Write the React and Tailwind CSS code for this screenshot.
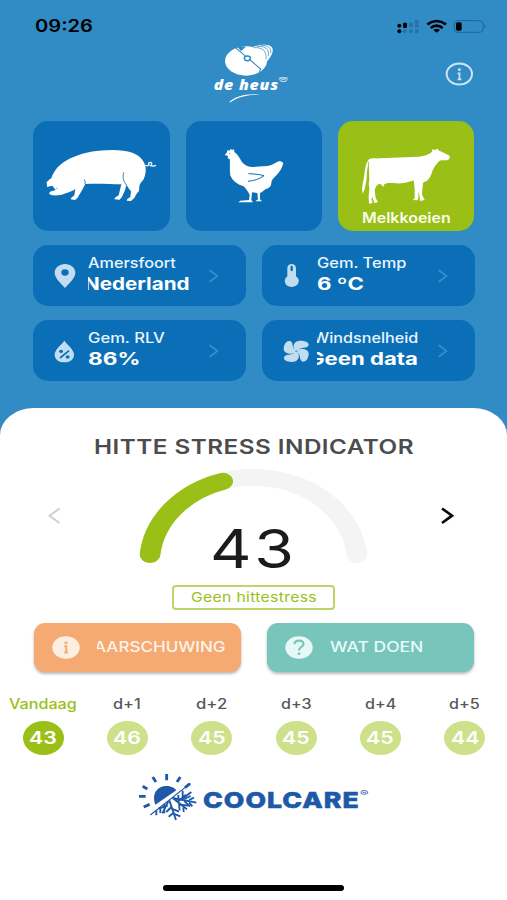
import { useLayoutEffect, useRef } from "react";

// Stretches a line of text horizontally so that it fills exactly `w` pixels.
function Fit({ w, className = "", children }) {
  const ref = useRef(null);
  useLayoutEffect(() => {
    const el = ref.current;
    el.style.transform = `scaleX(${w / el.offsetWidth})`;
  }, [w, children]);
  return (
    <span className="block shrink-0" style={{ width: w }}>
      <span ref={ref} className={`block w-max origin-left whitespace-nowrap leading-none ${className}`}>
        {children}
      </span>
    </span>
  );
}

function StatusBar() {
  return (
    <div className="flex h-[42px] items-start justify-between pl-[35px] pr-[19px] text-black">
      <div className="pt-[18px]">
        <Fit w={58} className="text-[17px] font-semibold">09:26</Fit>
      </div>
      <svg className="mt-[17px] h-[19px] w-[93px]" viewBox="1188 51 279 57">
        <g>
          <circle cx="1201" cy="77" r="6" />
          <circle cx="1201" cy="94" r="6" />
          <rect x="1212" y="68" width="12" height="16" rx="4" />
        </g>
        <g fill="#2673a6">
          <rect x="1212" y="88" width="11" height="11" rx="4" />
          <rect x="1230" y="68" width="11" height="14" rx="4" />
          <rect x="1230" y="88" width="11" height="11" rx="4" />
          <rect x="1248" y="60" width="11" height="23" rx="4" />
          <rect x="1248" y="88" width="11" height="11" rx="4" />
        </g>
        <g fill="none" stroke="#000" strokeWidth="8">
          <path d="M1285 73Q1313 53 1341 73" />
          <path d="M1295 84Q1313 70 1331 84" />
        </g>
        <path d="M1303 90Q1313 82 1323 90L1313 98Z" />
        <rect x="1366" y="62" width="86" height="35" rx="10" fill="none" stroke="#1f679a" strokeWidth="3" />
        <path d="M1456 72Q1463 79 1456 86Z" fill="#1f679a" />
        <rect x="1371" y="67" width="17" height="25" rx="5" />
      </svg>
    </div>
  );
}

function BrandLogo() {
  return (
    <svg className="h-[67px] w-[100px]" viewBox="600 126 300 201">
      <g fill="#fff">
        <path d="M757 141C785 132 815 131 818 148C820 162 808 177 793 194L775 160Z" />
        <ellipse cx="738" cy="183" rx="63" ry="44" />
      </g>
      <g fill="none" stroke="#318bc4" strokeWidth="2.2">
        <path d="M760 143C787 141 800 152 798 178" />
        <path d="M770 140C795 136 809 148 805 169" />
        <path d="M782 137C803 134 815 144 812 160" />
      </g>
      <path d="M706 143L742 173L782 207L778 215" fill="none" stroke="#318bc4" strokeWidth="3.2" />
      <path d="M709 137L723 153L738 140Z" fill="#318bc4" />
      <ellipse cx="742" cy="175" rx="9" ry="7" fill="#fff" stroke="#318bc4" strokeWidth="4.500" />
      <text
        x="641"
        y="270"
        textLength="196"
        lengthAdjust="spacingAndGlyphs"
        fill="#fff"
        className="font-['Open_Sans','Noto_Sans',sans-serif] text-[41px] font-extrabold italic tracking-[0.05em]"
      >
        de heus
      </text>
      <g fill="none" stroke="#cfe4f3" strokeWidth="3">
        <ellipse cx="850" cy="239" rx="11" ry="6" />
        <path d="M836 234H864M844 239H856" strokeWidth="2.5" />
      </g>
      <path d="M687 307C705 290 735 280 780 284C740 285 712 292 691 307Z" fill="#fff" />
    </svg>
  );
}

function InfoButton() {
  return (
    <svg className="h-[24px] w-[29px]" viewBox="1336 186 87 72">
      <ellipse cx="1379" cy="222" rx="38" ry="31.5" fill="none" stroke="#cbe5f6" strokeWidth="6" />
      <ellipse cx="1379" cy="209" rx="4.5" ry="4" fill="#cbe5f6" />
      <path d="M1374 220H1379.500V238M1374 238H1385" fill="none" stroke="#cbe5f6" strokeWidth="5" />
    </svg>
  );
}

function Pig() {
  return (
    <svg className="h-[110px] w-[137px]" viewBox="24 27 411 330">
      <path
        fill="#fff"
        d="M66 225L65 210L79 198C84 184 92 170 106 158C130 138 162 126 198 119C238 113 290 110 322 122C345 131 357 145 361 162C364 178 361 190 356 202C349 212 344 214 343 224L342 237C336 243 332 250 328 258L318 267L305 266L307 261L316 255L318 238C312 230 306 222 302 215L303 222C302 234 296 243 291 254L284 263L268 262L270 257L281 250L285 233L289 217C255 216 220 214 181 216L175 227C169 238 163 247 158 257L150 264L137 262L139 257L148 250L151 231C142 237 132 241 122 244C110 250 94 251 81 250L72 245L75 239L92 234L82 221Z"
      />
      <path d="M361 160Q368 164 372 158Q367 151 378 151Q384 156 376 161Q386 164 393 160" fill="none" stroke="#fff" strokeWidth="3.5" />
      <path d="M178 202Q182 209 180 217M296 181C293 197 294 207 304 218" fill="none" stroke="#0b6fb7" strokeWidth="2.5" />
      <circle cx="96" cy="229" r="2.500" fill="#7db4dc" />
    </svg>
  );
}

function Chicken() {
  return (
    <svg className="h-[110px] w-[136px]" viewBox="18 27 408 330">
      <path
        fill="#fff"
        d="M134 129L140 122L143 114L149 116L152 110L156 114L162 112L163 120C174 128 179 138 185 149C194 160 207 166 222 165C242 163 259 164 272 160C281 156 290 149 300 147L310 152C307 167 298 181 288 191C280 199 274 203 274 213C273 224 268 229 258 231C251 235 248 240 240 243V262L246 268H226L234 262L232 243L216 241L214 264L219 271H175L181 266L207 264L209 249C204 238 197 230 191 223C173 218 158 208 151 190C148 174 151 158 149 141L143 139L144 132Z"
      />
      <path d="M205 185C225 186 238 187 252 191C238 201 224 206 204 208" fill="none" stroke="#0b6fb7" strokeWidth="3" />
      <circle cx="149" cy="124" r="1.8" fill="#4f9ad0" />
    </svg>
  );
}

function Cow() {
  return (
    <svg className="absolute inset-0 h-[110px] w-[137px]" viewBox="24 27 411 330">
      <path
        fill="#fff"
        d="M117 142C123 137 135 140 150 139L265 134C280 133 293 129 302 123L307 118L305 112L315 114L323 110L327 116C339 120 347 126 357 130L360 137L355 143C345 147 336 143 328 147C320 154 313 165 308 175C304 188 301 198 291 206C285 210 282 208 279 214L277 232L276 248L284 264L270 267L270 259L265 238L265 262L261 265L249 264L254 258L254 231L251 205C241 209 232 211 222 213C201 216 187 212 172 213L163 217L160 225L153 217L147 216C139 219 136 227 134 236L137 258L144 270L133 273L127 255L124 262L128 273L117 275L116 254L118 228C116 218 116 212 118 203L117 178L116 157C110 171 111 189 109 207L104 230L98 246L96 231L99 209C105 194 102 158 117 142Z"
      />
      <path d="M116 150C113 175 119 196 110 214" fill="none" stroke="#9abf17" strokeWidth="2.5" />
    </svg>
  );
}

function PinIcon() {
  return (
    <svg className="h-[61px] w-[55px]" viewBox="24 21 165 183">
      <path fill="#c2dcf0" fillRule="evenodd" d="M120 78C137 78 151 89 151 104C151 120 132 136 120 150C108 136 89 120 89 104C89 89 103 78 120 78ZM120 94A11 9.500 0 1 0 120 113A11 9.500 0 1 0 120 94Z" />
    </svg>
  );
}

function HumidityIcon() {
  return (
    <svg className="h-[61px] w-[55px]" viewBox="24 246 165 183">
      <path fill="#c2dcf0" d="M118 308C126 320 147 334 147 350C147 365 134 373 118 373C102 373 89 365 89 350C89 334 110 320 118 308Z" />
      <path d="M105 360L132 338" stroke="#0b6fb7" strokeWidth="5" />
      <ellipse cx="108" cy="340" rx="6" ry="5" fill="#0b6fb7" />
      <ellipse cx="128" cy="357" rx="6" ry="5" fill="#0b6fb7" />
    </svg>
  );
}

function ThermometerIcon() {
  return (
    <svg className="h-[61px] w-[55px]" viewBox="27 21 165 183">
      <path fill="#c2dcf0" d="M103 90C103 74 129 74 129 90V115C145 125 137 147 116 147C95 147 89 125 103 115Z" />
      <path d="M116 87V96" stroke="#0b6fb7" strokeWidth="7" strokeLinecap="round" />
    </svg>
  );
}

function FanIcon() {
  return (
    <svg className="h-[61px] w-[55px]" viewBox="27 246 165 183">
      <g fill="#c2dcf0">
        <path d="M128 340C118 332 118 309 140 308C158 307 169 314 167 322C164 332 144 327 134 337Z" />
        <path d="M132 337C144 329 168 333 167 348C166 364 158 372 149 371C138 368 144 352 134 343Z" />
        <path d="M132 340C141 348 141 371 119 372C101 373 91 366 93 358C96 348 116 353 126 343Z" />
        <path d="M128 343C116 351 92 347 92 332C93 316 102 307 111 309C122 312 116 328 126 337Z" />
        <ellipse cx="130" cy="340" rx="8" ry="7" />
      </g>
      <ellipse cx="130" cy="340" rx="3.500" ry="3" fill="#5b9fd2" />
    </svg>
  );
}

function MetricCard({ icon, label, labelW, labelClass = "", value, valueW, valueClass = "" }) {
  return (
    <div className="flex h-[61px] w-[213px] rounded-[15px] bg-[#0b6fb7]">
      {icon}
      <div className="flex h-[61px] w-[104px] flex-col overflow-hidden pt-[11px] text-white">
        <div className={labelClass}>
          <Fit w={labelW} className="text-[14px] font-medium text-[#e9f5fc]">{label}</Fit>
        </div>
        <div className={`pt-[5px] ${valueClass}`}>
          <Fit w={valueW} className="text-[17.500px] font-bold">{value}</Fit>
        </div>
      </div>
      <svg className="ml-[16px] mt-[24px] h-[14px] w-[11px]" viewBox="0 0 11 14">
        <path d="M1.500 1L9.500 7L1.500 13" fill="none" stroke="#358fce" strokeWidth="1.600" />
      </svg>
    </div>
  );
}

function Gauge() {
  return (
    <div className="relative h-[128px] w-[240px]">
      <svg className="h-[128px] w-[240px]" viewBox="133 457 240 128">
        <g transform="translate(253.500 562.700) scale(1.220 1)" fill="none" strokeWidth="17" strokeLinecap="round">
          <path d="M-84.800 -8.200A85.200 85.200 0 0 1 84.800 -8.200" stroke="#f4f4f4" />
          <path d="M-84.800 -8.200A85.200 85.200 0 0 1 -25.300 -81.400" stroke="#9abf17" />
        </g>
      </svg>
      <div className="absolute left-[77px] top-[65px] text-[#1b1b1b]">
        <Fit w={87} className="text-[54px] font-normal tracking-[0.04em]">43</Fit>
      </div>
    </div>
  );
}

const days = [
  { label: "Vandaag", w: 68, value: "43", active: true },
  { label: "d+1", w: 28, value: "46" },
  { label: "d+2", w: 31, value: "45" },
  { label: "d+3", w: 31, value: "45" },
  { label: "d+4", w: 31, value: "45" },
  { label: "d+5", w: 31, value: "44" },
];

function CoolcareMark() {
  return (
    <svg className="h-[52px] w-[64px]" viewBox="36 24 192 156">
      <g stroke="#1d59a8" fill="none">
        <g strokeWidth="8.500">
          <path d="M42 97H62M53 67L67 75M83 39L93 54M125 30V49M166 39L156 54M56 129L74 121M180 71L195 59" />
        </g>
        <path d="M76 153L196 58" strokeWidth="3.500" />
        <g strokeWidth="5.500">
          <path d="M143 102L186 136M133 109L153 168M143 102L214 116M100 134L128 125" />
          <path d="M160 93V112L183 92M173 80V104L199 84" />
          <path d="M178 105L197 96M178 111L195 128M192 108L207 101M192 115L202 127" />
          <path d="M166 122L190 125M162 119L164 139M175 130L176 144" />
          <path d="M139 129L124 144M140 134L162 143M145 147L131 158M145 149L166 157" />
          <path d="M118 119V148M106 129V147M94 139V154M130 112L112 148" />
        </g>
      </g>
      <path d="M91 122C79 90 96 68 121 66C139 65 151 73 154 79Z" fill="#1d59a8" />
    </svg>
  );
}

export default function App() {
  return (
    <div className="flex h-[900px] w-[507px] flex-col overflow-hidden bg-[#318bc4] font-['Inter','Liberation_Sans',sans-serif]">
      <StatusBar />
      <div className="flex h-[79px] justify-between pl-[200px] pr-[33px]">
        <BrandLogo />
        <div className="pt-[20px]">
          <InfoButton />
        </div>
      </div>

      <div className="flex gap-4 px-[33px]">
        <div className="h-[110px] w-[137px] rounded-[15px] bg-[#0b6fb7]">
          <Pig />
        </div>
        <div className="h-[110px] w-[136px] rounded-[15px] bg-[#0b6fb7]">
          <Chicken />
        </div>
        <div className="relative flex h-[110px] w-[137px] flex-col items-center justify-end rounded-[15px] bg-[#9abf17] pb-[6px]">
          <Cow />
          <Fit w={89} className="text-[14px] font-semibold text-[#fbfde9]">Melkkoeien</Fit>
        </div>
      </div>

      <div className="grid grid-cols-[213px_213px] gap-x-4 gap-y-[14px] px-[33px] pt-[14px]">
        <MetricCard icon={<PinIcon />} label="Amersfoort" labelW={88} value="Nederland" valueW={105} valueClass="-ml-[4px]" />
        <MetricCard icon={<ThermometerIcon />} label="Gem. Temp" labelW={89} value="6 ºC" valueW={47} />
        <MetricCard icon={<HumidityIcon />} label="Gem. RLV" labelW={77} value="86%" valueW={53} />
        <MetricCard
          icon={<FanIcon />}
          label="Windsnelheid"
          labelW={105}
          labelClass="-ml-[4px]"
          value="Geen data"
          valueW={110}
          valueClass="-ml-[9px]"
        />
      </div>

      <div className="mt-[27px] flex h-[492px] flex-col items-center bg-white pt-[29px] [border-radius:34px_34px_0_0/27px_27px_0_0]">
        <Fit w={320} className="text-[20px] font-semibold tracking-[0.02em] text-[#4c4c4e]">HITTE STRESS INDICATOR</Fit>

        <div className="flex h-[128px] w-full items-start pl-[47px]">
          <svg className="mt-[50px] h-[18px] w-[14px]" viewBox="0 0 14 18">
            <path d="M12.500 1.500L2.500 8.700L12.500 16" fill="none" stroke="#cfcfcf" strokeWidth="2" />
          </svg>
          <div className="ml-[72px]">
            <Gauge />
          </div>
          <svg className="ml-[67px] mt-[50px] h-[18px] w-[14px]" viewBox="0 0 14 18">
            <path d="M2 1.500L12 8.700L2 16" fill="none" stroke="#0a0a0a" strokeWidth="2.700" />
          </svg>
        </div>

        <div className="flex h-[25px] w-[163px] items-center justify-center rounded-[4px] border-2 border-[#bcd46a]">
          <Fit w={126} className="text-[13.500px] font-normal tracking-[0.02em] text-[#9abf17]">Geen hittestress</Fit>
        </div>

        <div className="flex w-full gap-[26px] pl-[34px] pt-[13px]">
          <div className="flex h-[49px] w-[207px] items-center rounded-[11px] bg-[#f4aa72] pl-[18px] shadow-[0_2px_3px_rgba(0,0,0,0.28)]">
            <svg className="h-[23px] w-[28px]" viewBox="0 0 28 23">
              <ellipse cx="14" cy="11.500" rx="13.700" ry="11.300" fill="#fdeee2" />
              <ellipse cx="14" cy="6.800" rx="1.700" ry="1.400" fill="#f4aa72" />
              <path d="M12.300 10.300H14.200V16.500M12.300 16.500H16" stroke="#f4aa72" strokeWidth="2" fill="none" />
            </svg>
            <div className="ml-[17px] w-[130px] overflow-hidden">
              <div className="-ml-[19px]">
                <Fit w={148} className="text-[14.500px] font-medium text-[#fff3e9]">WAARSCHUWING</Fit>
              </div>
            </div>
          </div>
          <div className="flex h-[49px] w-[207px] items-center rounded-[11px] bg-[#77c5bb] pl-[18px] shadow-[0_2px_3px_rgba(0,0,0,0.28)]">
            <svg className="h-[23px] w-[28px]" viewBox="0 0 28 23">
              <ellipse cx="14" cy="11.500" rx="13.700" ry="11.300" fill="#e6f8f7" />
              <path d="M9.500 8.300C9.500 3.500 18.500 3.500 18.500 8C18.500 11 14 11 14 14.500" stroke="#77c5bb" strokeWidth="2.100" fill="none" />
              <ellipse cx="14" cy="17.700" rx="1.500" ry="1.300" fill="#77c5bb" />
            </svg>
            <div className="ml-[17px]">
              <Fit w={93} className="text-[14.500px] font-medium text-[#e9fbfa]">WAT DOEN</Fit>
            </div>
          </div>
        </div>

        <div className="grid w-full grid-cols-6 pl-px pt-[25px]">
          {days.map((d) => (
            <div key={d.label} className="flex flex-col items-center gap-[10px]">
              <Fit w={d.w} className={d.active ? "text-[14px] font-medium text-[#9abf17]" : "text-[14px] font-medium text-[#58585a]"}>
                {d.label}
              </Fit>
              <div
                className={
                  d.active
                    ? "flex h-[34px] w-[41px] items-center justify-center rounded-[50%] bg-[#9abf17]"
                    : "flex h-[34px] w-[41px] items-center justify-center rounded-[50%] bg-[#cfe08a]"
                }
              >
                <Fit w={28} className="text-[17.500px] font-semibold text-white">{d.value}</Fit>
              </div>
            </div>
          ))}
        </div>

        <div className="flex w-full pl-[137px] pt-[17px]">
          <CoolcareMark />
          <div className="pl-[2px] pt-[17px]">
            <Fit w={157} className="text-[22px] font-extrabold tracking-[0.04em] text-[#1d59a8] [-webkit-text-stroke:0.600px_#1d59a8]">COOLCARE</Fit>
          </div>
          <div className="pt-[17px]">
            <Fit w={8} className="text-[8px] font-medium text-[#1d59a8]">®</Fit>
          </div>
        </div>

        <div className="mb-[9px] mt-auto h-[6px] w-[181px] rounded-full bg-black" />
      </div>
    </div>
  );
}
